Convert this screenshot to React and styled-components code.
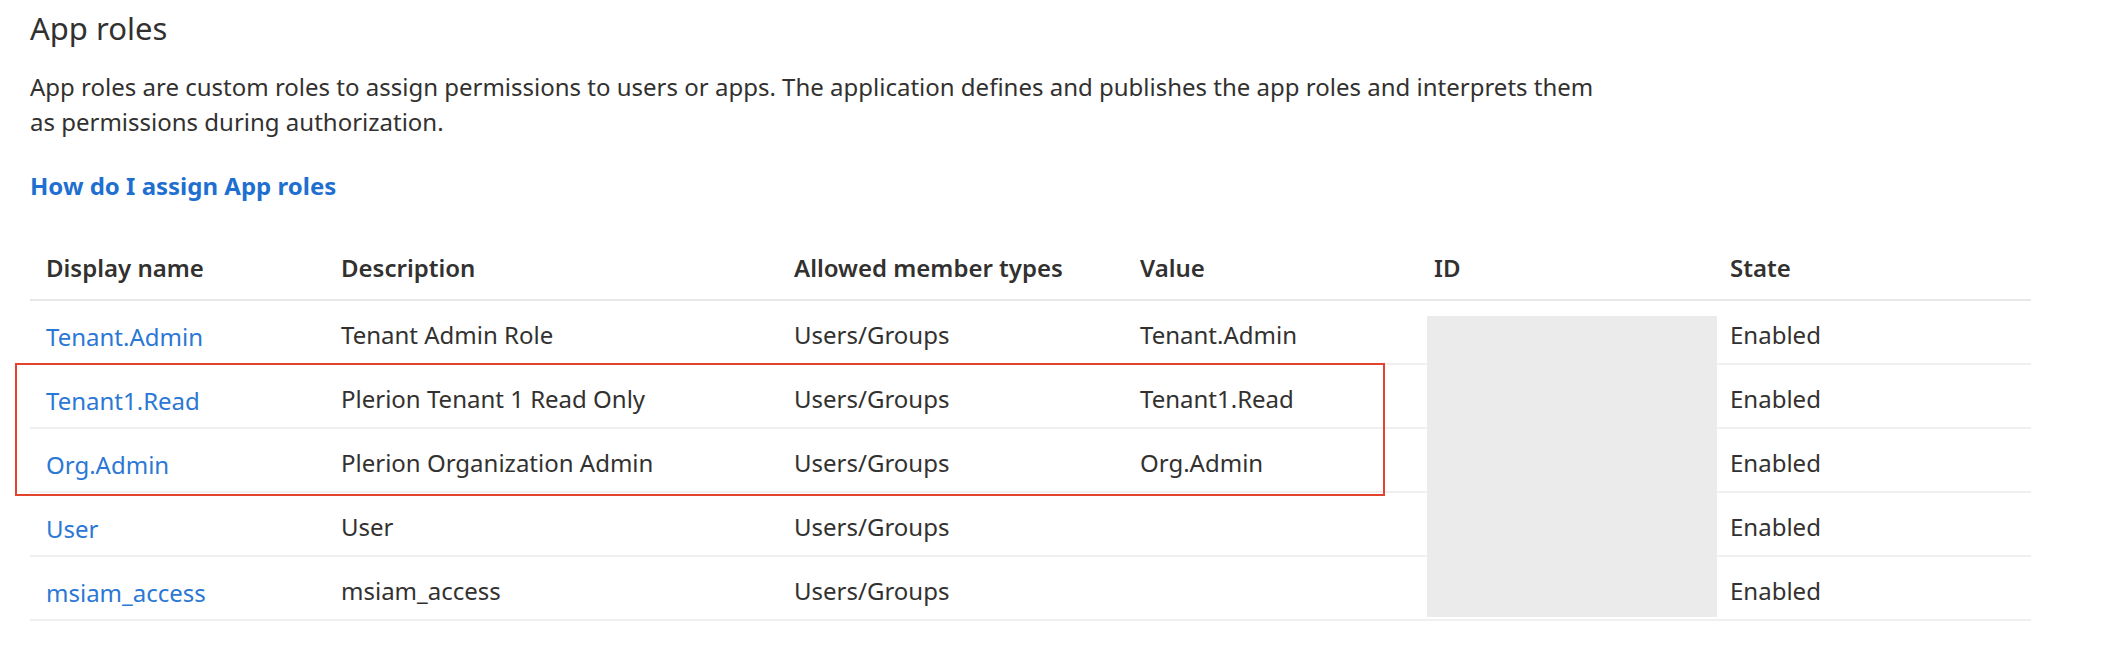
import React from "react";
import styled, { createGlobalStyle } from "styled-components";

const Global = createGlobalStyle`
  body { margin: 0; background: #fff; font-family: "Noto Sans", "Open Sans", sans-serif; color: #323130; }
`;

const Page = styled.div`
  padding: 8px 0 0 30px;
`;
const Title = styled.h1`
  margin: 0; font-size: 31px; font-weight: 400; line-height: 40px; color: #323130;
`;
const Desc = styled.p`
  margin: 21px 0 0; font-size: 24px; line-height: 35px; color: #323130;
`;
const HelpLink = styled.a`
  display: block; margin-top: 32px; font-size: 24px; line-height: 30px; font-weight: 700;
  color: #1f6fd1; text-decoration: none;
`;
const TableWrap = styled.div`
  position: relative; margin-top: 34px; width: 2001px;
`;
const Row = styled.div`
  display: grid;
  grid-template-columns: 295px 453px 346px 294px 296px 1fr;
  height: ${p => (p.$head ? 64 : 62)}px;
  border-bottom: 2px solid ${p => (p.$head ? "#e8e8e8" : "#f0f0f0")};
  align-items: center;
`;
const Cell = styled.div`
  padding-left: 16px; font-size: 24px; white-space: nowrap;
  font-weight: ${p => (p.$head ? 600 : 400)};
  color: ${p => (p.$link ? "#2b78d4" : "#323130")};
  padding-top: ${p => (p.$head ? 0 : p.$link ? 9 : 5)}px;
`;
const Redact = styled.div`
  position: absolute; left: 1397px; top: 81px; width: 290px; height: 301px; background: #ebebeb;
`;
const Highlight = styled.div`
  position: absolute; left: -15px; top: 128px; width: 1366px; height: 129px;
  border: 2px solid #e3432d; pointer-events: none;
`;

const rows = [
  ["Tenant.Admin", "Tenant Admin Role", "Users/Groups", "Tenant.Admin"],
  ["Tenant1.Read", "Plerion Tenant 1 Read Only", "Users/Groups", "Tenant1.Read"],
  ["Org.Admin", "Plerion Organization Admin", "Users/Groups", "Org.Admin"],
  ["User", "User", "Users/Groups", ""],
  ["msiam_access", "msiam_access", "Users/Groups", ""],
];

export default function App() {
  return (
    <Page>
      <Global />
      <Title>App roles</Title>
      <Desc>
        App roles are custom roles to assign permissions to users or apps. The application defines and publishes the app roles and interprets them
        <br />as permissions during authorization.
      </Desc>
      <HelpLink href="#">How do I assign App roles</HelpLink>
      <TableWrap>
        <Row $head>
          {["Display name", "Description", "Allowed member types", "Value", "ID", "State"].map(h => (
            <Cell $head key={h}>{h}</Cell>
          ))}
        </Row>
        {rows.map(r => (
          <Row key={r[0]}>
            <Cell $link>{r[0]}</Cell>
            <Cell>{r[1]}</Cell>
            <Cell>{r[2]}</Cell>
            <Cell>{r[3]}</Cell>
            <Cell></Cell>
            <Cell>Enabled</Cell>
          </Row>
        ))}
        <Redact />
        <Highlight />
      </TableWrap>
    </Page>
  );
}
